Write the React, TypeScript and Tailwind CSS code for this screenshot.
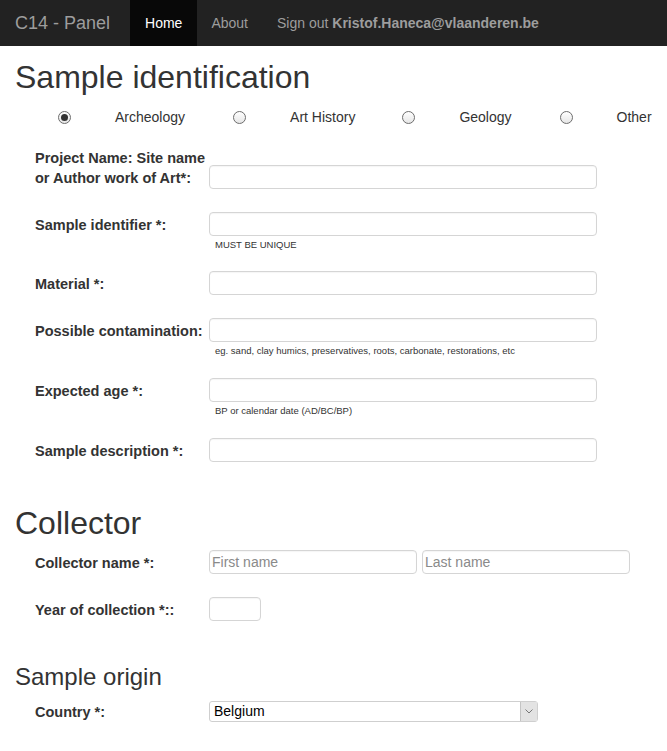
import React from 'react';

const font = { fontFamily: '"Liberation Sans", Arial, sans-serif' };

function Radio({ checked }: { checked?: boolean }) {
  return (
    <span className="relative inline-flex h-[13px] w-[13px] shrink-0 items-center justify-center rounded-full border border-[#6d6d6d] bg-gradient-to-b from-white to-[#e6e6e6]">
      {checked && <span className="h-[7px] w-[7px] rounded-full bg-[#333]" />}
    </span>
  );
}

function TextInput({ className = 'w-[388px]', placeholder }: { className?: string; placeholder?: string }) {
  return (
    <input
      type="text"
      placeholder={placeholder}
      className={`h-[24px] rounded-[4px] border border-[#d5d5d5] bg-white px-[2px] text-[14px] text-[#333] shadow-[inset_0_1px_1px_rgba(0,0,0,0.04)] placeholder:text-[#8a8a8a] focus:outline-none ${className}`}
    />
  );
}

function Row({ label, help, children }: { label: string; help?: string; children?: React.ReactNode }) {
  return (
    <div className="pl-[35px]">
      <div className="flex h-[24px] items-center">
        <label className="w-[174px] pt-[3px] text-[14.5px] font-bold text-[#333]">{label}</label>
        {children ?? <TextInput />}
      </div>
      {help && (
        <p className="mt-[3px] pl-[180px] text-[9.5px] leading-[12px] text-[#333]">{help}</p>
      )}
    </div>
  );
}

export default function App() {
  // offsets tuned per column so radios line up with the original table cells
  const kinds = [
    { name: 'Archeology', ml: '' },
    { name: 'Art History', ml: 'ml-[48px]' },
    { name: 'Geology', ml: 'ml-[47px]' },
    { name: 'Other', ml: 'ml-[48px]' },
  ];

  return (
    <div className="min-h-screen bg-white text-[#333]" style={font}>
      <nav className="flex h-[46px] items-center bg-[#222] text-[14px] text-[#9d9d9d]">
        <span className="pl-[15px] pr-[20px] text-[18px]">C14 - Panel</span>
        <a className="flex h-full items-center bg-[#080808] px-[15px] text-white">Home</a>
        <a className="flex h-full items-center pl-[14px] pr-[15px]">About</a>
        <a className="flex h-full items-center px-[14px]">
          Sign out&nbsp;<b className="font-bold">Kristof.Haneca@vlaanderen.be</b>
        </a>
      </nav>

      <div className="px-[15px]">
        <h1 className="mt-[12px] text-[32px] leading-[38px] text-[#333]">Sample identification</h1>

        <div className="mt-[11px] flex items-center pl-[43px] text-[14px]">
          {kinds.map((k, i) => (
            <div key={k.name} className={`flex items-center gap-[44px] ${k.ml}`}>
              <Radio checked={i === 0} />
              <span>{k.name}</span>
            </div>
          ))}
        </div>
      </div>

      <div className="mt-[20px] flex items-end pl-[35px]">
        <label className="w-[174px] pb-[1px] text-[14.5px] font-bold leading-[20px] text-[#333]">
          Project Name: Site name
          <br />
          or Author work of Art*:
        </label>
        <TextInput />
      </div>

      <div className="mt-[23px]">
        <Row label="Sample identifier *:" help="MUST BE UNIQUE" />
      </div>
      <div className="mt-[20px]">
        <Row label="Material *:" />
      </div>
      <div className="mt-[23px]">
        <Row label="Possible contamination:" help="eg. sand, clay humics, preservatives, roots, carbonate, restorations, etc" />
      </div>
      <div className="mt-[21px]">
        <Row label="Expected age *:" help="BP or calendar date (AD/BC/BP)" />
      </div>
      <div className="mt-[21px]">
        <Row label="Sample description *:" />
      </div>

      <h1 className="mt-[42px] px-[15px] text-[32px] leading-[38px] text-[#333]">Collector</h1>

      <div className="mt-[8px]">
        <Row label="Collector name *:">
          <div className="flex gap-[5px]">
            <TextInput className="w-[208px]" placeholder="First name" />
            <TextInput className="w-[208px]" placeholder="Last name" />
          </div>
        </Row>
      </div>
      <div className="mt-[23px]">
        <Row label="Year of collection *::">
          <TextInput className="w-[52px]" />
        </Row>
      </div>

      <h3 className="mt-[43px] px-[15px] text-[24px] leading-[26px] text-[#333]">Sample origin</h3>

      <div className="mt-[11px] pl-[35px]">
        <div className="flex h-[21px] items-center">
          <label className="w-[174px] pt-[2px] text-[14.5px] font-bold text-[#333]">Country *:</label>
          <div className="flex h-[21px] w-[329px] items-stretch rounded-[3px] border border-[#cfcfcf] bg-white">
            <span className="flex flex-1 items-center pl-[4px] text-[14px] text-black">Belgium</span>
            <span className="flex w-[17px] items-center justify-center border-l border-[#c4c4c4] bg-[#e3e3e3]">
              <svg width="8" height="5" viewBox="0 0 8 5" fill="none">
                <path d="M0.5 0.5 L4 4 L7.5 0.5" stroke="#777" strokeWidth="1" />
              </svg>
            </span>
          </div>
        </div>
      </div>
      <div className="h-[30px]" />
    </div>
  );
}
